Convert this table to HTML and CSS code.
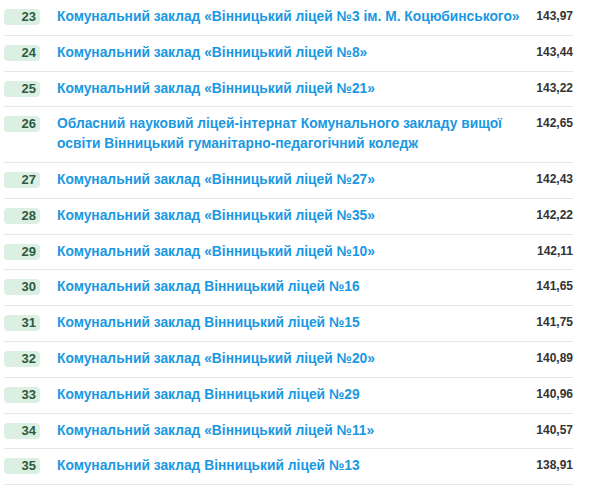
FILE: index.html
```html
<!DOCTYPE html>
<html lang="uk">
<head>
<meta charset="utf-8">
<link rel="stylesheet" href="styles.css">
</head>
<body>
<div class="list">
  <div class="row"><span class="rank">23</span><a class="name">Комунальний заклад «Вінницький ліцей №3 ім. М. Коцюбинського»</a><span class="score">143,97</span></div>
  <div class="row"><span class="rank">24</span><a class="name">Комунальний заклад «Вінницький ліцей №8»</a><span class="score">143,44</span></div>
  <div class="row"><span class="rank">25</span><a class="name">Комунальний заклад «Вінницький ліцей №21»</a><span class="score">143,22</span></div>
  <div class="row"><span class="rank">26</span><a class="name">Обласний науковий ліцей-інтернат Комунального закладу вищої освіти Вінницький гуманітарно-педагогічний коледж</a><span class="score">142,65</span></div>
  <div class="row"><span class="rank">27</span><a class="name">Комунальний заклад «Вінницький ліцей №27»</a><span class="score">142,43</span></div>
  <div class="row"><span class="rank">28</span><a class="name">Комунальний заклад «Вінницький ліцей №35»</a><span class="score">142,22</span></div>
  <div class="row"><span class="rank">29</span><a class="name">Комунальний заклад «Вінницький ліцей №10»</a><span class="score">142,11</span></div>
  <div class="row"><span class="rank">30</span><a class="name">Комунальний заклад Вінницький ліцей №16</a><span class="score">141,65</span></div>
  <div class="row"><span class="rank">31</span><a class="name">Комунальний заклад Вінницький ліцей №15</a><span class="score">141,75</span></div>
  <div class="row"><span class="rank">32</span><a class="name">Комунальний заклад «Вінницький ліцей №20»</a><span class="score">140,89</span></div>
  <div class="row"><span class="rank">33</span><a class="name">Комунальний заклад Вінницький ліцей №29</a><span class="score">140,96</span></div>
  <div class="row"><span class="rank">34</span><a class="name">Комунальний заклад «Вінницький ліцей №11»</a><span class="score">140,57</span></div>
  <div class="row"><span class="rank">35</span><a class="name">Комунальний заклад Вінницький ліцей №13</a><span class="score">138,91</span></div>
</div>
</body>
</html>
```
FILE: styles.css
```css
html, body {
  margin: 0;
  padding: 0;
  background: #ffffff;
}
body {
  font-family: "Liberation Sans", Arial, sans-serif;
}
.list {
  width: 569px;
  margin-left: 4px;
}
.row {
  display: flex;
  align-items: flex-start;
  padding: 7px 0 8px;
  border-bottom: 1px solid #e6e6e6;
  line-height: 19.8px;
}
.rank {
  flex: 0 0 auto;
  width: 36px;
  height: 16px;
  margin-top: 2px;
  box-sizing: border-box;
  padding-right: 4px;
  background: #dcefe3;
  border-radius: 4px;
  color: #2d5a3d;
  font-size: 13px;
  font-weight: bold;
  line-height: 16px;
  text-align: right;
}
.name {
  flex: 1 1 auto;
  margin-left: 17px;
  color: #1a98e2;
  font-size: 13.8px;
  font-weight: bold;
  text-decoration: none;
}
.score {
  flex: 0 0 44px;
  text-align: right;
  color: #333333;
  font-size: 12px;
  font-weight: bold;
}
```
